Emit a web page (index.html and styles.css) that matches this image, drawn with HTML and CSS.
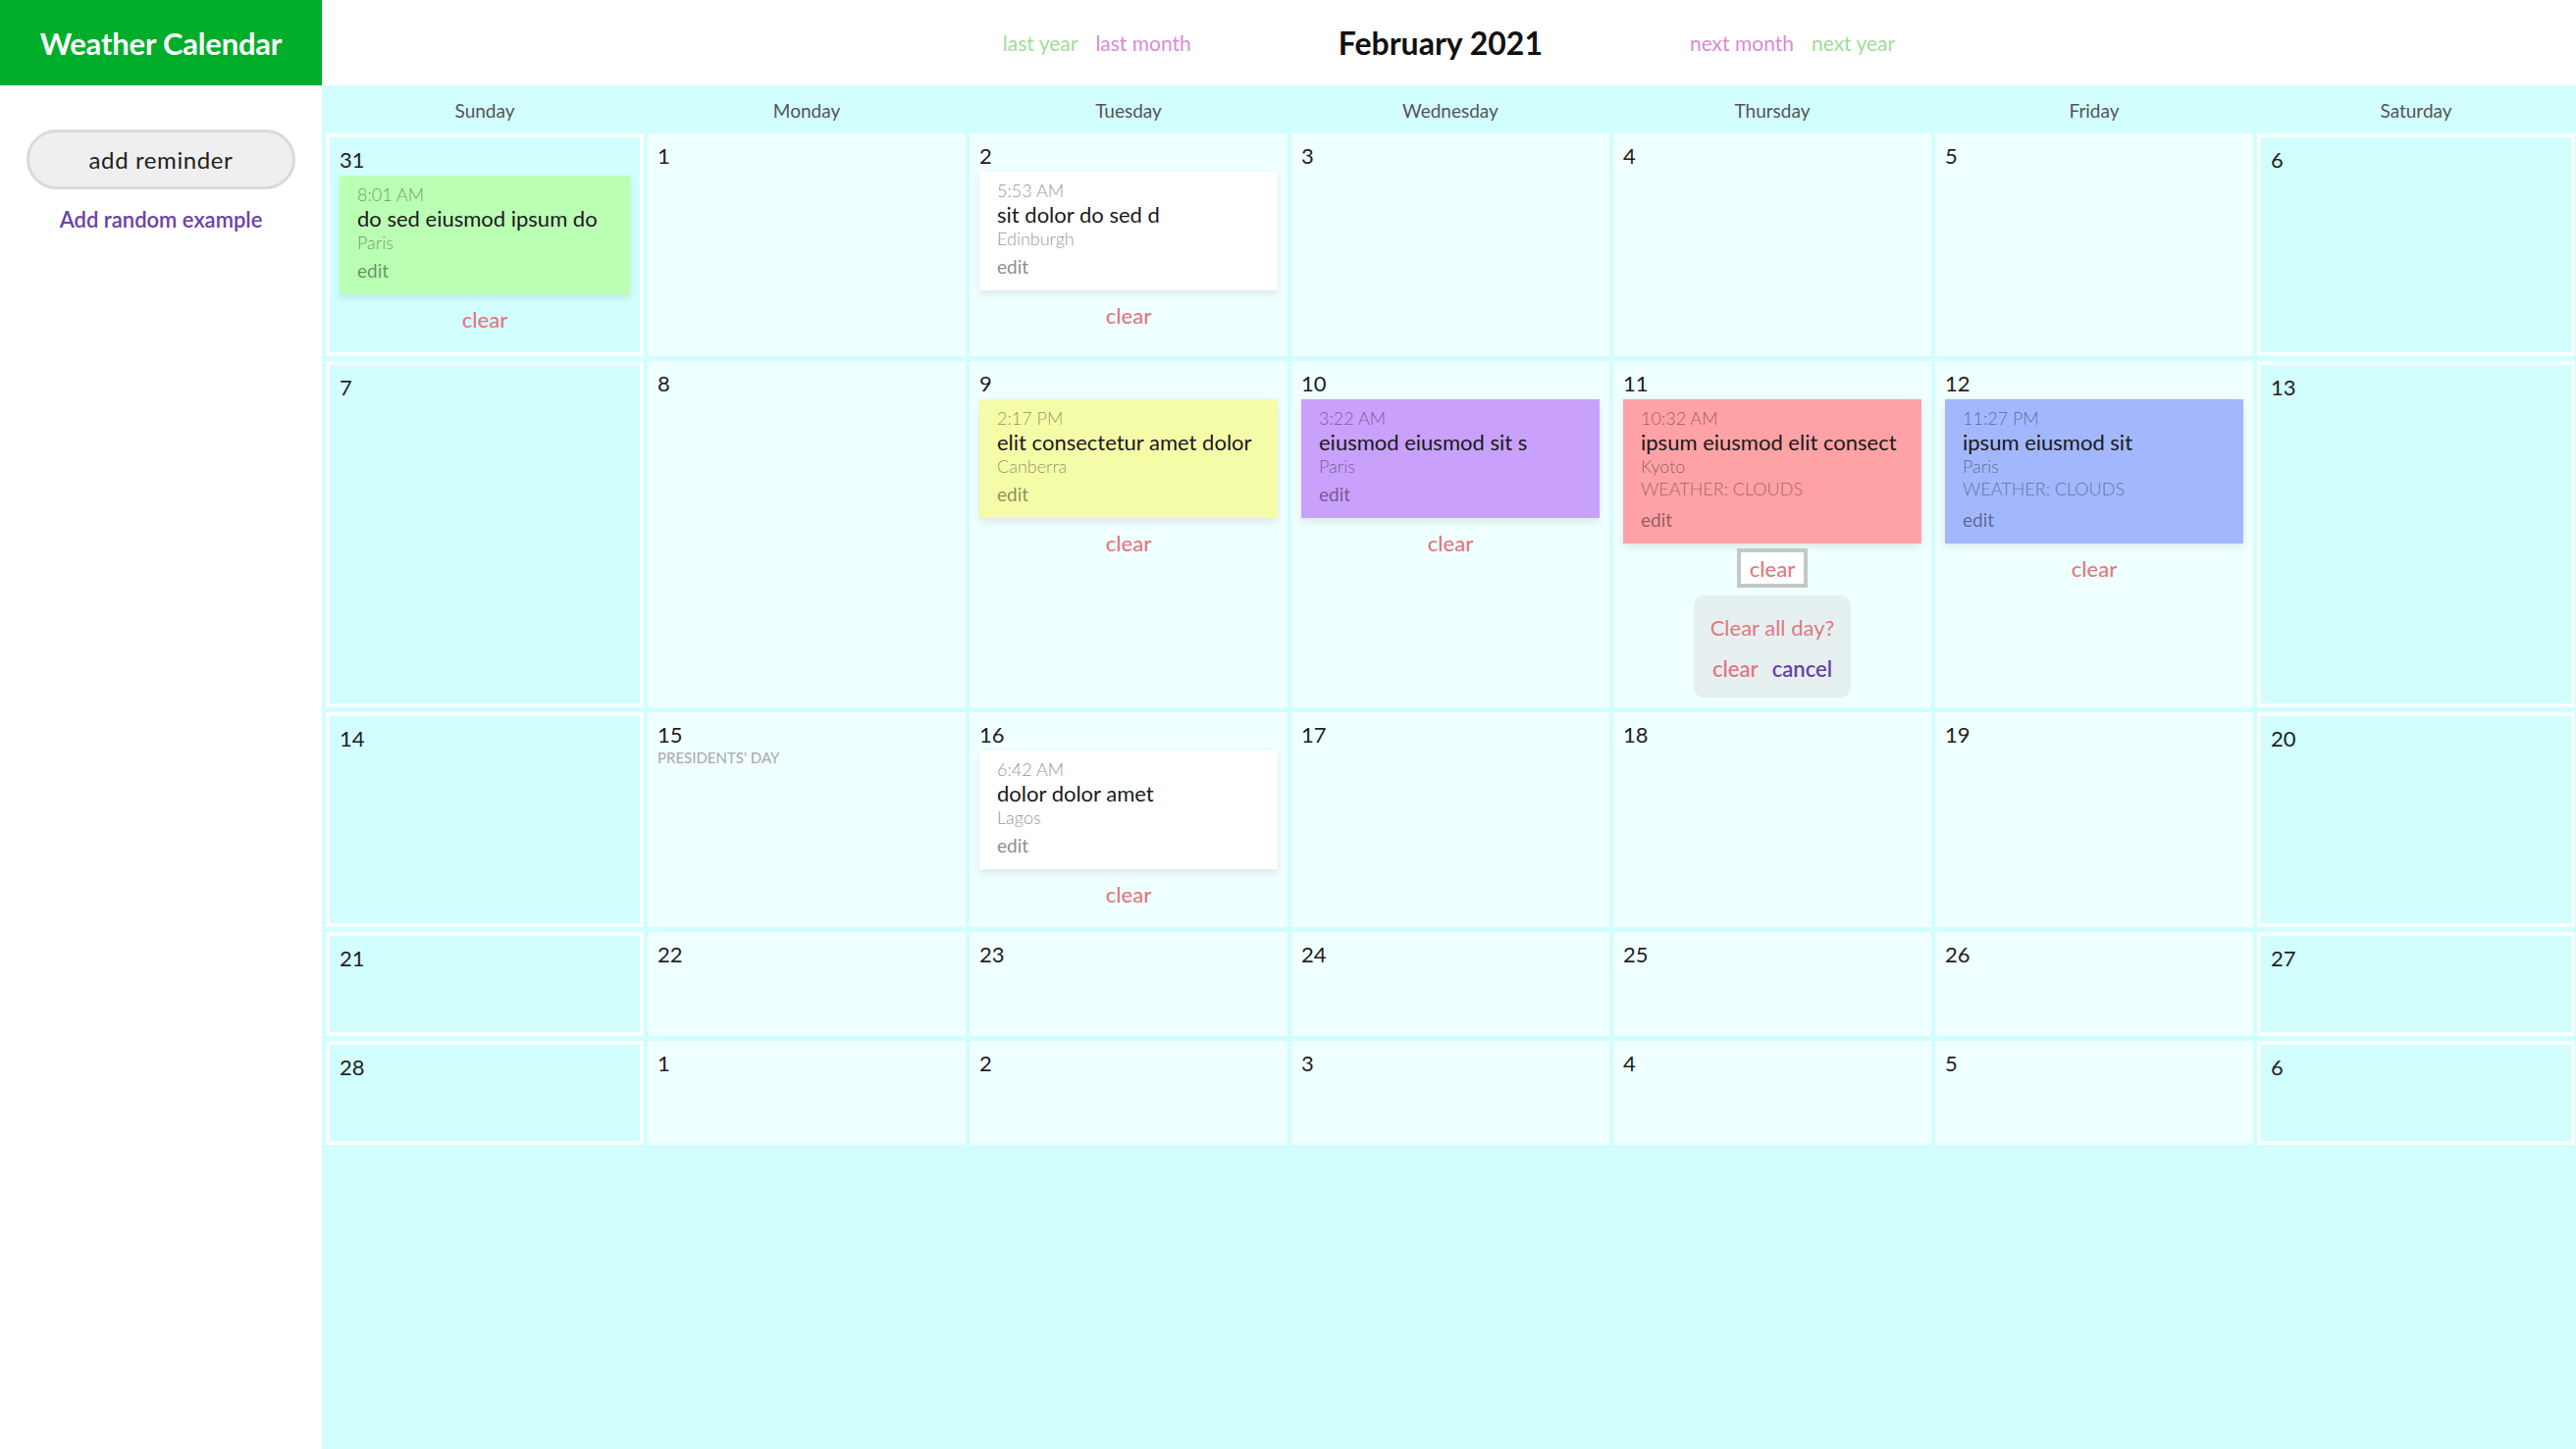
FILE: index.html
```html
<!DOCTYPE html>
<html lang="en">
<head>
<meta charset="utf-8">
<title>Weather Calendar</title>
<link rel="stylesheet" href="styles.css">
</head>
<body>
<div class="app">
  <aside class="sidebar">
    <div class="brand">Weather Calendar</div>
    <div class="actions">
      <button class="add-btn">add reminder</button>
      <a class="random-link">Add random example</a>
    </div>
  </aside>
  <main class="main">
    <header class="topbar">
      <div class="nav-group">
        <a class="nav-link year">last year</a>
        <a class="nav-link month">last month</a>
      </div>
      <h1 class="month-title">February 2021</h1>
      <div class="nav-group">
        <a class="nav-link month">next month</a>
        <a class="nav-link year">next year</a>
      </div>
    </header>
    <section class="calendar">
      <div class="dow">Sunday</div>
      <div class="dow">Monday</div>
      <div class="dow">Tuesday</div>
      <div class="dow">Wednesday</div>
      <div class="dow">Thursday</div>
      <div class="dow">Friday</div>
      <div class="dow">Saturday</div>

      <!-- row 1 -->
      <div class="cell weekend">
        <div class="num">31</div>
        <div class="event green">
          <div class="time">8:01 AM</div>
          <div class="title">do sed eiusmod ipsum do</div>
          <div class="place">Paris</div>
          <div class="edit">edit</div>
        </div>
        <button class="clear">clear</button>
      </div>
      <div class="cell"><div class="num">1</div></div>
      <div class="cell">
        <div class="num">2</div>
        <div class="event white">
          <div class="time">5:53 AM</div>
          <div class="title">sit dolor do sed d</div>
          <div class="place">Edinburgh</div>
          <div class="edit">edit</div>
        </div>
        <button class="clear">clear</button>
      </div>
      <div class="cell"><div class="num">3</div></div>
      <div class="cell"><div class="num">4</div></div>
      <div class="cell"><div class="num">5</div></div>
      <div class="cell weekend"><div class="num">6</div></div>

      <!-- row 2 -->
      <div class="cell weekend"><div class="num">7</div></div>
      <div class="cell"><div class="num">8</div></div>
      <div class="cell">
        <div class="num">9</div>
        <div class="event yellow">
          <div class="time">2:17 PM</div>
          <div class="title">elit consectetur amet dolor</div>
          <div class="place">Canberra</div>
          <div class="edit">edit</div>
        </div>
        <button class="clear">clear</button>
      </div>
      <div class="cell">
        <div class="num">10</div>
        <div class="event purple">
          <div class="time">3:22 AM</div>
          <div class="title">eiusmod eiusmod sit s</div>
          <div class="place">Paris</div>
          <div class="edit">edit</div>
        </div>
        <button class="clear">clear</button>
      </div>
      <div class="cell">
        <div class="num">11</div>
        <div class="event red">
          <div class="time">10:32 AM</div>
          <div class="title">ipsum eiusmod elit consect</div>
          <div class="place">Kyoto</div>
          <div class="weather">Weather: Clouds</div>
          <div class="edit">edit</div>
        </div>
        <button class="clear focused">clear</button>
        <div class="confirm">
          <div class="confirm-q">Clear all day?</div>
          <div class="confirm-actions">
            <a class="confirm-clear">clear</a>
            <a class="confirm-cancel">cancel</a>
          </div>
        </div>
      </div>
      <div class="cell">
        <div class="num">12</div>
        <div class="event blue">
          <div class="time">11:27 PM</div>
          <div class="title">ipsum eiusmod sit</div>
          <div class="place">Paris</div>
          <div class="weather">Weather: Clouds</div>
          <div class="edit">edit</div>
        </div>
        <button class="clear">clear</button>
      </div>
      <div class="cell weekend"><div class="num">13</div></div>

      <!-- row 3 -->
      <div class="cell weekend"><div class="num">14</div></div>
      <div class="cell">
        <div class="num">15</div>
        <div class="holiday">Presidents' Day</div>
      </div>
      <div class="cell">
        <div class="num">16</div>
        <div class="event white">
          <div class="time">6:42 AM</div>
          <div class="title">dolor dolor amet</div>
          <div class="place">Lagos</div>
          <div class="edit">edit</div>
        </div>
        <button class="clear">clear</button>
      </div>
      <div class="cell"><div class="num">17</div></div>
      <div class="cell"><div class="num">18</div></div>
      <div class="cell"><div class="num">19</div></div>
      <div class="cell weekend"><div class="num">20</div></div>

      <!-- row 4 -->
      <div class="cell weekend"><div class="num">21</div></div>
      <div class="cell"><div class="num">22</div></div>
      <div class="cell"><div class="num">23</div></div>
      <div class="cell"><div class="num">24</div></div>
      <div class="cell"><div class="num">25</div></div>
      <div class="cell"><div class="num">26</div></div>
      <div class="cell weekend"><div class="num">27</div></div>

      <!-- row 5 -->
      <div class="cell weekend"><div class="num">28</div></div>
      <div class="cell"><div class="num">1</div></div>
      <div class="cell"><div class="num">2</div></div>
      <div class="cell"><div class="num">3</div></div>
      <div class="cell"><div class="num">4</div></div>
      <div class="cell"><div class="num">5</div></div>
      <div class="cell weekend"><div class="num">6</div></div>
    </section>
  </main>
</div>
</body>
</html>
```

FILE: styles.css
```css
* { box-sizing: border-box; }

html, body {
  margin: 0;
  padding: 0;
  height: 100%;
}

body {
  font-family: Lato, "Open Sans", "Liberation Sans", sans-serif;
  color: #222;
  background: #fff;
}

.app {
  display: flex;
  min-height: 100vh;
}

/* ---------- sidebar ---------- */
.sidebar {
  width: 328px;
  flex: 0 0 328px;
  display: flex;
  flex-direction: column;
  background: #fff;
}

.brand {
  height: 87px;
  background: #00ae2b;
  color: #fff;
  font-weight: 700;
  font-size: 31px;
  display: flex;
  align-items: center;
  justify-content: center;
  letter-spacing: -0.2px;
}

.actions {
  display: flex;
  flex-direction: column;
  align-items: center;
  padding: 45px 27px 0;
}

.add-btn {
  width: 100%;
  height: 61px;
  border-radius: 31px;
  border: 3px solid #dadada;
  background: #efefef;
  font-family: inherit;
  font-size: 24px;
  letter-spacing: 0.6px;
  color: #222;
  cursor: pointer;
}

.random-link {
  margin-top: 18px;
  font-size: 22px;
  line-height: 26px;
  font-weight: 600;
  color: #6a42a8;
  cursor: pointer;
}

/* ---------- main ---------- */
.main {
  flex: 1;
  display: flex;
  flex-direction: column;
  background: #d2fefe;
}

.topbar {
  height: 87px;
  background: #fff;
  display: flex;
  align-items: center;
  justify-content: center;
  gap: 150px;
}

.nav-group {
  display: flex;
  gap: 18px;
}

.nav-link {
  font-size: 21px;
  cursor: pointer;
}

.nav-link.year { color: #a0dc9a; }
.nav-link.month { color: #dd8ad2; }

.month-title {
  margin: 0;
  font-size: 32px;
  font-weight: 700;
  color: #111;
}

/* ---------- calendar ---------- */
.calendar {
  flex: 1;
  display: grid;
  grid-template-columns: repeat(7, 1fr);
  grid-auto-rows: min-content;
  align-content: start;
  column-gap: 4px;
  row-gap: 5px;
  padding: 0 1px 4px 4px;
}

.dow {
  height: 44px;
  padding-top: 13px;
  line-height: 26px;
  text-align: center;
  font-size: 19px;
  color: #555;
}

.cell {
  min-height: 106px;
  background: #f0ffff;
  padding: 10px;
  display: flex;
  flex-direction: column;
  align-items: stretch;
}

.cell.weekend {
  background: #d2fefe;
  border: 4px solid #f8ffff;
}

.num {
  font-size: 22px;
  line-height: 26px;
  color: #222;
}

.holiday {
  font-size: 15px;
  line-height: 20px;
  text-transform: uppercase;
  color: #a8a8a8;
}

/* ---------- events ---------- */
.event {
  margin-top: 3px;
  padding: 7px 18px 11px;
  box-shadow: 0 4px 8px rgba(0, 0, 0, 0.09);
}

.event.white { background: #ffffff; }
.event.green { background: #baffb4; }
.event.yellow { background: #f5fca8; }
.event.purple { background: #c9a0fc; }
.event.red { background: #ffa2a6; }
.event.blue { background: #a3b7fe; }

.time {
  font-size: 18px;
  line-height: 24px;
  font-weight: 300;
  color: rgba(0, 0, 0, 0.45);
}

.title {
  font-size: 22px;
  line-height: 26px;
  color: #1a1a1a;
  white-space: nowrap;
  overflow: hidden;
}

.place {
  font-size: 18px;
  line-height: 22px;
  font-weight: 300;
  color: rgba(0, 0, 0, 0.45);
}

.weather {
  font-size: 18px;
  line-height: 24px;
  font-weight: 300;
  text-transform: uppercase;
  color: rgba(0, 0, 0, 0.42);
  margin-bottom: 7px;
}

.edit {
  margin-top: 5px;
  font-size: 19px;
  line-height: 26px;
  color: rgba(0, 0, 0, 0.45);
}

.white .time, .white .place { color: #999; }
.white .edit { color: #8f8f8f; }

/* ---------- clear button + confirm ---------- */
.clear {
  align-self: center;
  margin: 5px 0 4px;
  height: 40px;
  padding: 0 9px;
  border: 4px solid transparent;
  background: transparent;
  font-family: inherit;
  font-size: 22px;
  font-weight: 500;
  color: #e27880;
  cursor: pointer;
}

.clear.focused {
  border-color: #c2c7c7;
  background: #fff;
}

.confirm {
  align-self: center;
  width: 160px;
  margin-top: 4px;
  padding: 20px 0 16px;
  background: #e6f0f0;
  border-radius: 10px;
  display: flex;
  flex-direction: column;
  align-items: center;
  gap: 16px;
}

.confirm-q {
  font-size: 22px;
  line-height: 26px;
  color: #e27880;
}

.confirm-actions {
  display: flex;
  gap: 14px;
  font-size: 22px;
  line-height: 26px;
  font-weight: 600;
}

.confirm-clear { color: #e27880; cursor: pointer; }
.confirm-cancel { color: #6a42a8; cursor: pointer; }
```
